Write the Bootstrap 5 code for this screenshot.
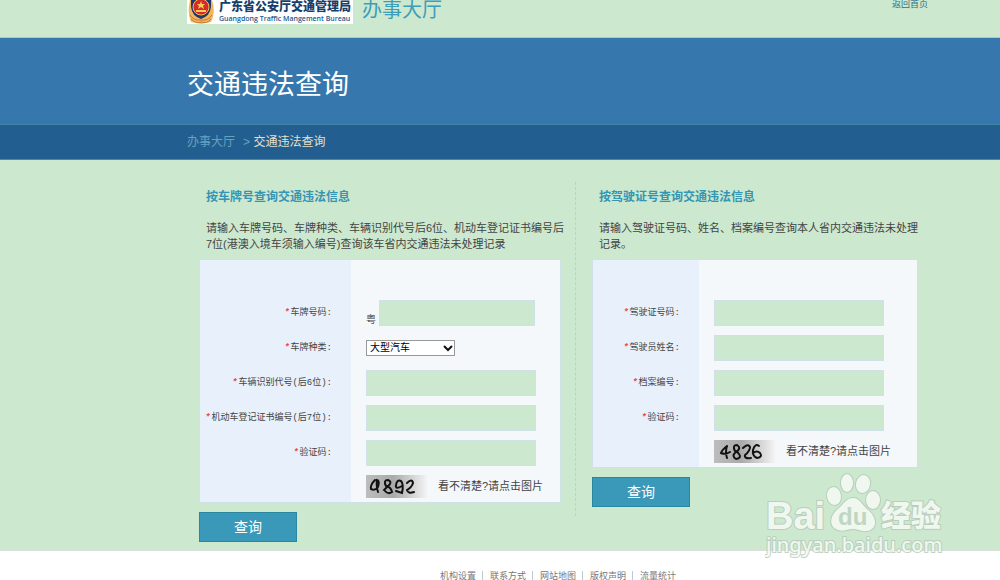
<!DOCTYPE html>
<html lang="zh-CN">
<head>
<meta charset="utf-8">
<meta name="viewport" content="width=device-width, initial-scale=1">
<title>交通违法查询</title>
<link href="https://cdn.jsdelivr.net/npm/bootstrap@5.3.0/dist/css/bootstrap.min.css" rel="stylesheet">
<style>
body { font-family: "Liberation Sans", "Noto Sans CJK SC", sans-serif; font-size: 11px; line-height: 16px; color: #444; background: #fff; }
a { text-decoration: none; }
.shell { padding-left: 187px; padding-right: 72px; }
.site-head { height: 38px; background: #cce8cf; border-bottom: 1px solid #a5cec8; overflow: hidden; }
.logo-box { width: 166px; height: 24px; background: #fff; color: #173f6b; }
.logo-zh { font-size: 12px; line-height: 14px; font-weight: 900; }
.logo-en { font-family: "Open Sans", sans-serif; font-size: 7px; line-height: 10px; font-weight: 600; color: #235a8c; }
.hall { font-family: "Liberation Serif", "Noto Sans CJK SC", serif; font-size: 20px; line-height: 20px; color: #3e9db8; padding-left: 9px; }
.home-link { font-size: 9px; line-height: 8px; color: #2c6e85; }
.title-band { background: #3678ae; padding-top: 30px; padding-bottom: 26px; }
.title-band h1 { font-family: "Noto Sans CJK SC", sans-serif; font-size: 27px; line-height: 30px; font-weight: 400; color: #fff; }
.crumb-band { background: #235e90; border-top: 1px solid #4285a0; border-bottom: 1px solid #5287a3; font-size: 12px; line-height: 34px; }
.crumb-band a, .crumb-sep { color: #64a3c0; }
.crumb-now { color: #e6e0c8; }
.query-area { background: #cce8cf; padding: 22px 82px 8px 199px; border-bottom: 1px solid #d8dfd9; }
.query-grid { display: grid; grid-template-columns: minmax(0, 362fr) minmax(0, 343fr); column-gap: 14px; align-items: start; }
.split { border-left: 1px dashed #bdd3c2; padding: 0 0 9px 16px; }
.query-grid h2 { font-size: 12px; line-height: 16px; font-weight: 700; color: #3595b3; margin: 7px 0 0 7px; }
.intro { margin: 15px 0 7px 7px; white-space: nowrap; }
.panel { --lab: 151px; border: 1px solid #cfe0e6; padding-top: 35px; background: linear-gradient(to right, #e8f1fb var(--lab), #f4f8fb var(--lab)); }
.panel.narrow { --lab: 106px; }
.field { display: grid; grid-template-columns: var(--lab) 1fr; height: 35px; align-items: center; }
.field.last { height: 32px; }
.field label { font-family: "Liberation Mono", "Noto Sans CJK SC", monospace; font-size: 9px; line-height: 12px; text-align: right; padding-right: 19px; white-space: nowrap; }
.field label i { color: #f54545; margin-right: 1px; font-weight: 700; }
.cell { padding-left: 15px; }
.province { font-size: 10px; line-height: 12px; width: 13px; }
.entry { width: 170px; height: 26px; border: 1px solid #cfe0e6; border-radius: 0; background: #cce8cf; padding: 0 6px; font-size: 11px; }
.entry.short { width: 156px; }
.kind { width: 89px; height: 16px; border: 1px solid #999; border-radius: 0; background: #fff; color: #000; font-size: 10px; line-height: 14px; padding: 0 3px; appearance: none; }
.kind-wrap { position: relative; width: 89px; height: 16px; }
.kind-wrap svg { position: absolute; right: 2px; top: 5px; pointer-events: none; }
.code-img { width: 61px; height: 23px; background: linear-gradient(to right, #bdbdbd, #aaa 45%, #f4f4f4); }
.code-tip { padding-left: 11px; }
.btn-query { width: 98px; height: 30px; margin-top: 9px; padding: 0; border: 1px solid #29879f; border-radius: 0; background: #3a98b8; color: #fff; font-size: 14px; line-height: 28px; }
.btn-query:hover { background: #2f89a8; color: #fff; }
.watermark { position: absolute; right: 50px; bottom: -14px; opacity: .8; }
.foot { padding: 20px 0 0 440px; font-size: 9px; line-height: 10px; }
.foot a { color: #777; }
.foot a + a { border-left: 1px solid #bcc; margin-left: 6px; padding-left: 7px; }
</style>
</head>
<body>
<header class="site-head shell d-flex justify-content-between align-items-start">
  <div class="d-flex">
    <div class="logo-box d-flex">
      <svg class="flex-shrink-0" width="32" height="24" viewBox="0 0 32 24" aria-hidden="true">
        <path d="M3 0H25Q29 12 24 22L14 24 4 22Q0 12 3 0Z" fill="#f2b65d"/>
        <path d="M3 15Q7 21 14 20Q21 21 25 15M4 19Q9 24 14 22Q20 24 24 19" fill="none" stroke="#c87a35"/>
        <path d="M4 0H24V7Q23 16 14 19Q5 16 4 7Z" fill="#24376d"/>
        <circle cx="14" cy="7" r="8" fill="#d8292b" stroke="#f0bd50"/>
        <path d="M14 1l1 3h3l-2 2 1 3-3-2-3 2 1-3-2-2h3zM9 10h10v2H9z" fill="#f7ce55"/>
      </svg>
      <div class="text-nowrap">
        <div class="logo-zh">广东省公安厅交通管理局</div>
        <div class="logo-en">Guangdong Traffic Mangement Bureau</div>
      </div>
    </div>
    <div class="hall">办事大厅</div>
  </div>
  <a class="home-link" href="#">返回首页</a>
</header>

<div class="title-band shell"><h1 class="m-0">交通违法查询</h1></div>
<nav class="crumb-band shell" aria-label="位置">
  <a href="#">办事大厅</a><span class="crumb-sep ms-2">&gt;</span> <span class="crumb-now">交通违法查询</span>
</nav>

<main class="query-area position-relative">
  <div class="query-grid">
    <form>
      <h2>按车牌号查询交通违法信息</h2>
      <p class="intro">请输入车牌号码、车牌种类、车辆识别代号后6位、机动车登记证书编号后<br>7位(港澳入境车须输入编号)查询该车省内交通违法未处理记录</p>
      <div class="panel">
        <div class="field"><label for="plate"><i>*</i>车牌号码:</label><div class="cell d-flex align-items-end"><span class="province">粤</span><input class="entry short" id="plate" type="text"></div></div>
        <div class="field"><label for="kind"><i>*</i>车牌种类:</label><div class="cell"><div class="kind-wrap"><select class="kind d-block" id="kind"><option>大型汽车</option><option>小型汽车</option></select><svg width="10" height="7" viewBox="0 0 10 7" aria-hidden="true"><path d="M1 1l4 4 4-4" fill="none" stroke="#111" stroke-width="2"/></svg></div></div></div>
        <div class="field"><label for="vin"><i>*</i>车辆识别代号(后6位):</label><div class="cell d-flex"><input class="entry" id="vin" type="text"></div></div>
        <div class="field"><label for="cert"><i>*</i>机动车登记证书编号(后7位):</label><div class="cell d-flex"><input class="entry" id="cert" type="text"></div></div>
        <div class="field"><label for="code1"><i>*</i>验证码:</label><div class="cell d-flex"><input class="entry" id="code1" type="text"></div></div>
        <div class="field last"><span></span><div class="cell d-flex align-items-center text-nowrap">
          <svg class="code-img" viewBox="0 0 61 23" role="img" aria-label="验证码"><g fill="none" stroke="#111" stroke-width="2" stroke-linecap="round"><path d="M9 5Q4 10 5 14Q9 16 12 12Q14 6 11 5Q10 10 12 17"/><path d="M20 11Q17 5 22 5Q27 7 22 11L18 15Q22 20 26 17Q25 12 20 11"/><path d="M36 11Q29 15 30 10Q31 4 35 6Q38 9 36 18L30 16"/><path d="M41 8Q46 3 47 8Q46 12 41 15Q42 19 48 17"/></g></svg>
          <span class="code-tip">看不清楚?请点击图片</span></div></div>
      </div>
      <button class="btn btn-query d-block" type="button">查询</button>
    </form>
    <form class="split">
      <h2>按驾驶证号查询交通违法信息</h2>
      <p class="intro">请输入驾驶证号码、姓名、档案编号查询本人省内交通违法未处理<br>记录。</p>
      <div class="panel narrow">
        <div class="field"><label for="lic"><i>*</i>驾驶证号码:</label><div class="cell d-flex"><input class="entry" id="lic" type="text"></div></div>
        <div class="field"><label for="name"><i>*</i>驾驶员姓名:</label><div class="cell d-flex"><input class="entry" id="name" type="text"></div></div>
        <div class="field"><label for="file"><i>*</i>档案编号:</label><div class="cell d-flex"><input class="entry" id="file" type="text"></div></div>
        <div class="field"><label for="code2"><i>*</i>验证码:</label><div class="cell d-flex"><input class="entry" id="code2" type="text"></div></div>
        <div class="field last"><span></span><div class="cell d-flex align-items-center text-nowrap">
          <svg class="code-img" viewBox="0 0 61 23" role="img" aria-label="验证码"><g fill="none" stroke="#111" stroke-width="2" stroke-linecap="round"><path d="M13 6Q8 10 7 13Q11 15 16 12M13 6Q11 12 13 18"/><path d="M21 11Q18 5 23 5Q28 8 22 12Q17 16 22 19Q28 18 25 14Q24 12 21 11"/><path d="M29 8Q34 3 36 7Q36 11 31 15Q30 19 37 18"/><path d="M45 6Q41 3 39 10Q38 16 43 18Q49 17 46 13Q43 10 39 13"/></g></svg>
          <span class="code-tip">看不清楚?请点击图片</span></div></div>
      </div>
      <button class="btn btn-query d-block" type="button">查询</button>
    </form>
  </div>
  <svg class="watermark" width="185" height="92" viewBox="0 0 185 92">
    <g fill="#f8fbf8" stroke="#b4c9b7" stroke-width="2" paint-order="stroke">
      <ellipse cx="69" cy="24" rx="7" ry="9" transform="rotate(-10 69 24)"/>
      <ellipse cx="82" cy="11" rx="6" ry="9"/>
      <ellipse cx="98" cy="12" rx="7" ry="9" transform="rotate(12 98 12)"/>
      <ellipse cx="108" cy="28" rx="7" ry="9"/>
      <path d="M88 26C95 26 97 33 103 38C112 45 113 57 102 59C96 60 93 57 88 57C82 57 79 60 73 58C63 55 65 43 73 37C79 32 81 26 88 26Z"/>
      <text x="1" y="57" font-family="Liberation Sans" font-weight="700" font-size="38">Bai</text>
      <text x="116" y="54" font-family="Noto Sans CJK SC" font-weight="900" font-size="30">经验</text>
      <text x="1" y="80" font-family="Noto Sans" font-weight="500" font-size="20">jingyan.baidu.com</text>
    </g>
    <text x="73" y="53" font-family="Liberation Sans" font-weight="700" font-size="24" fill="#bdd3c0">du</text>
  </svg>
</main>

<footer class="foot text-nowrap">
  <a href="#">机构设置</a><a href="#">联系方式</a><a href="#">网站地图</a><a href="#">版权声明</a><a href="#">流量统计</a>
</footer>
<script src="https://cdn.jsdelivr.net/npm/bootstrap@5.3.0/dist/js/bootstrap.bundle.min.js"></script>
</body>
</html>
